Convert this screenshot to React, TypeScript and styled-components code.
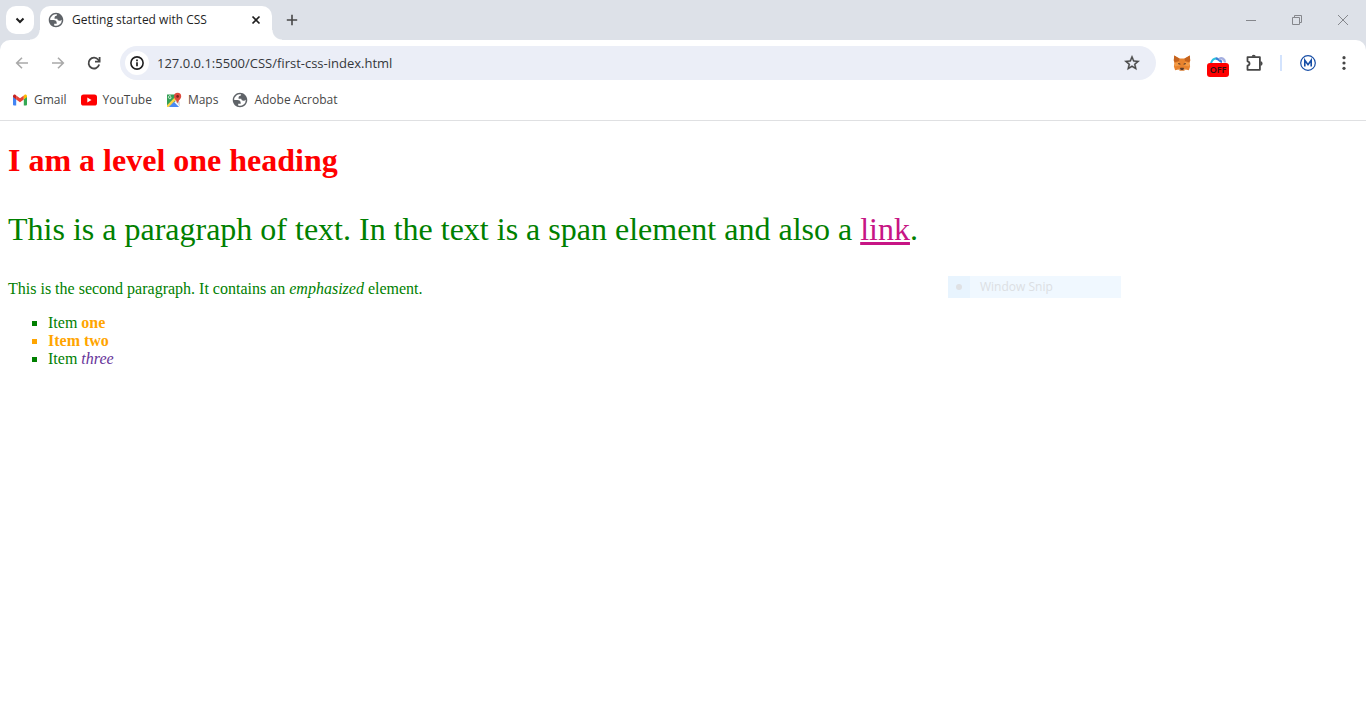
import React from "react";
import styled, { createGlobalStyle } from "styled-components";

const GlobalStyle = createGlobalStyle`
  *, *::before, *::after { box-sizing: border-box; }
  body { margin: 0; background: #ffffff; }
`;

const uiFont = `"Segoe UI", "Open Sans", "Noto Sans", sans-serif`;
const stripColor = "#dde1e8";

const Browser = styled.div`
  display: flex;
  flex-direction: column;
  min-height: 100vh;
  background: #ffffff;
`;

const Chrome = styled.header`
  font-family: ${uiFont};
  font-size: 12px;
  color: #1f1f1f;
  background: ${stripColor};
`;

const TabStrip = styled.div`
  display: flex;
  height: 40px;
  padding-left: 6px;
`;

const IconButton = styled.button<{ $width?: number; $color?: string }>`
  display: flex;
  align-items: center;
  justify-content: center;
  flex: none;
  width: ${({ $width = 36 }) => $width}px;
  padding: 0;
  border: 0;
  background: transparent;
  color: ${({ $color = "#474747" }) => $color};
`;

const TabSearch = styled(IconButton)`
  height: 28px;
  margin: 6px 6px 0 0;
  border-radius: 10px;
  background: #ffffff;
`;

const Tab = styled.div`
  position: relative;
  display: flex;
  align-items: center;
  width: 232px;
  margin-top: 6px;
  padding: 0 4px 6px 8px;
  border-radius: 10px 10px 0 0;
  background: #ffffff;

  &::before,
  &::after {
    content: "";
    position: absolute;
    bottom: 0;
    width: 10px;
    height: 10px;
  }
  &::before {
    right: 100%;
    background: radial-gradient(circle at 0 0, transparent 9px, #ffffff 10px);
  }
  &::after {
    left: 100%;
    background: radial-gradient(circle at 100% 0, transparent 9px, #ffffff 10px);
  }
`;

const TabTitle = styled.span`
  flex: 1;
  margin-left: 8px;
  font-size: 12px;
  line-height: 16px;
  white-space: nowrap;
`;

const WindowControls = styled.div`
  display: flex;
  margin-left: auto;
`;

const Toolbar = styled.div`
  display: flex;
  height: 40px;
  padding: 6px 4px 0;
  border-radius: 10px 10px 0 0;
  background: #ffffff;
`;

const AddressBar = styled.div`
  display: flex;
  align-items: center;
  flex: 1;
  min-width: 0;
  height: 34px;
  margin: 0 8px;
  padding: 0 6px 0 5px;
  border-radius: 17px;
  background: #ebeef7;
`;

const SiteInfo = styled(IconButton)`
  height: 24px;
  border-radius: 12px;
  background: #ffffff;
`;

const AddressInput = styled.input`
  flex: 1;
  min-width: 0;
  margin-left: 8px;
  padding: 0;
  border: 0;
  outline: 0;
  background: transparent;
  color: #35373b;
  font-family: ${uiFont};
  font-size: 13px;
  line-height: 20px;
`;

const Divider = styled.span`
  flex: none;
  align-self: center;
  width: 2px;
  height: 16px;
  margin: 0 8px;
  background: #d3e3fd;
`;

const Extension = styled(IconButton)`
  position: relative;
`;

const OffBadge = styled.span`
  position: absolute;
  left: 7px;
  top: 17px;
  width: 22px;
  height: 14px;
  border-radius: 3px;
  background: #ff0000;
  color: #2a1010;
  font-family: ${uiFont};
  font-size: 9px;
  font-weight: 600;
  line-height: 14px;
  text-align: center;
`;

const Bookmarks = styled.nav`
  display: flex;
  align-items: center;
  gap: 14px;
  height: 41px;
  padding: 0 12px;
  border-bottom: 1px solid #dfe0e2;
  background: #ffffff;
`;

const Bookmark = styled.a`
  display: flex;
  align-items: center;
  gap: 6px;
  color: #474747;
  font-size: 12px;
  line-height: 16px;
  text-decoration: none;
`;

const Page = styled.main`
  padding: 0 8px;
  color: green;
  font-family: "Times New Roman", "Liberation Serif", serif;
  font-size: 16px;
  line-height: 18px;
`;

const Heading = styled.h1`
  margin: 21px 0 0;
  color: red;
  font-size: 32px;
  line-height: 37px;
`;

const Lead = styled.p`
  margin: 32px 0;
  font-size: 32px;
  line-height: 37px;
`;

const PageLink = styled.a`
  color: mediumvioletred;
  text-decoration-thickness: 3px;
`;

const Paragraph = styled.p`
  margin: 0 0 16px;
`;

const List = styled.ul`
  margin: 0;
  padding-left: 40px;
  list-style-type: square;
`;

const Item = styled.li<{ $special?: boolean }>`
  color: ${({ $special }) => ($special ? "orange" : "green")};
  font-weight: ${({ $special }) => ($special ? "bold" : "normal")};
`;

const Highlight = styled.span`
  color: orange;
  font-weight: bold;
`;

const ItemEmphasis = styled.em`
  color: rebeccapurple;
`;

const SnipMenu = styled.div`
  position: absolute;
  left: 948px;
  top: 276px;
  display: flex;
  align-items: center;
  width: 173px;
  height: 22px;
  background: #f0f8ff;
  color: #dcdfe3;
  font-family: ${uiFont};
  font-size: 12px;
  line-height: 16px;
`;

const SnipMark = styled.span`
  display: flex;
  align-items: center;
  justify-content: center;
  width: 22px;
  height: 22px;
  margin-right: 10px;
  background: #e8f4fe;

  &::before {
    content: "";
    width: 6px;
    height: 6px;
    border-radius: 3px;
    background: #dfe1e4;
  }
`;

const GlobeIcon = () => (
  <svg width="16" height="16" viewBox="1 1 22 22" fill="#5f6368" aria-hidden="true">
    <path
      fillRule="evenodd"
      d="M12 2C6.48 2 2 6.48 2 12s4.48 10 10 10 10-4.48 10-10S17.52 2 12 2zM4 12h4.4c3.407.022 4.922 1.73 4.543 5.127H9.488v2.47a8.004 8.004 0 0 0 10.498-8.083C19.327 12.504 18.332 13 17 13c-2.137 0-3.206-.916-3.206-2.75h-3.748c-.274-2.728.683-4.092 2.87-4.092 0-.975.327-1.597.811-1.97A8.004 8.004 0 0 0 4 12z"
    />
  </svg>
);

const StrokeIcon = ({ d, size = 16, width = 1.5 }: { d: string; size?: number; width?: number }) => (
  <svg width={size} height={size} viewBox={`0 0 ${size} ${size}`} fill="none" stroke="currentColor" strokeWidth={width} aria-hidden="true">
    <path d={d} />
  </svg>
);

const ReloadIcon = () => (
  <svg width="16" height="16" viewBox="0 0 16 16" fill="none" stroke="currentColor" strokeWidth="1.8" aria-hidden="true">
    <path d="M13.2 9.6A5.4 5.4 0 1 1 12.3 4.8L13.6 6.2" />
    <path d="M13.6 2v4.7H9" />
  </svg>
);

const InfoIcon = () => (
  <svg width="16" height="16" viewBox="0 0 16 16" fill="none" stroke="currentColor" aria-hidden="true">
    <circle cx="8" cy="8" r="6.1" strokeWidth="1.6" />
    <path d="M8 7.2v4M8 4.6v1.6" strokeWidth="1.7" />
  </svg>
);

const StarIcon = () => (
  <svg width="18" height="18" viewBox="0 0 24 24" fill="currentColor" aria-hidden="true">
    <path d="M22 9.24l-7.19-.62L12 2 9.19 8.63 2 9.24l5.46 4.73L5.82 21 12 17.27 18.18 21l-1.63-7.03L22 9.24zM12 15.4l-3.76 2.27 1-4.28-3.32-2.88 4.38-.38L12 6.1l1.71 4.04 4.38.38-3.32 2.88 1 4.28L12 15.4z" stroke="currentColor" strokeWidth=".5" />
  </svg>
);

const FoxIcon = () => (
  <svg width="18" height="18" viewBox="0 0 18 18" aria-hidden="true">
    <path fill="#e8832e" d="M1.2 1.4 6.6 4.4h4.8l5.400-3 .4 5.200-.6 3 .5 3-1.200 3.600-3.300-.8-1.800 1.500H7.200l-1.800-1.500-3.300.8L.9 12.600l.5-3-.6-3z" />
    <path fill="#c4631f" d="M1.200 1.400 6.600 4.800 5.900 7 2 8.200.8 6.600zM16.800 1.400l-5.400 3.400.7 2.200L16 8.200l1.200-1.600z" />
    <path fill="#f39a45" d="m2 8.800 4-.8 1.200 3.600-5.600 1zM16 8.800l-4-.8-1.200 3.600 5.600 1z" />
    <path fill="#5a3a2a" d="m5 9 2.200.6.200 1.200-2-.6zM13 9l-2.200.6-.2 1.200 2-.6zM7.300 13.800h3.400l.3 1.400-.8.7H7.800l-.8-.7z" />
    <path fill="#d9b9a2" d="m5.400 14.600 1.600.6.8.7h2.400l.8-.7 1.600-.6-1.800 2H7.200z" />
  </svg>
);

const CloudIcon = () => (
  <svg width="18" height="16" viewBox="0 0 18 16" fill="none" aria-hidden="true">
    <path d="M2 8.200C3 5 5 3.500 7.400 3.500" stroke="#2cc3de" strokeWidth="2" />
    <path d="M6.800 3.500C9.400 3.200 10.400 6.200 13 7" stroke="#3a7fd5" strokeWidth="2.400" />
    <path d="M10 4.200C12.600 2.400 15.600 3.400 16 7.500" stroke="#a4aee0" strokeWidth="2.400" />
  </svg>
);

const PuzzleIcon = () => (
  <svg width="20" height="18" viewBox="0 0 20 18" aria-hidden="true">
    <path fill="none" stroke="currentColor" strokeWidth="1.8" strokeLinejoin="round" d="M3.500 3.200h12.400v12.600H3.500v-4.100c2.700-.5 2.700-3.900 0-4.400z" />
    <path fill="currentColor" d="M7.700 2.800a2 2 0 0 1 4 0zM16.400 7.300a2.100 2.100 0 0 1 0 4.400z" />
  </svg>
);

const ProfileIcon = () => (
  <svg width="18" height="18" viewBox="0 0 18 18" fill="none" stroke="#174ea6" aria-hidden="true">
    <circle cx="9" cy="9" r="7.3" strokeWidth="1.2" />
    <path d="M5.800 12.400V6.200L9 10.600 12.200 6.200v6.200" strokeWidth="1.6" />
  </svg>
);

const MenuIcon = () => (
  <svg width="16" height="16" viewBox="0 0 16 16" fill="currentColor" aria-hidden="true">
    <circle cx="8" cy="2.7" r="1.6" />
    <circle cx="8" cy="8" r="1.6" />
    <circle cx="8" cy="13.3" r="1.6" />
  </svg>
);

const GmailIcon = () => (
  <svg width="16" height="16" viewBox="0 0 16 16" aria-hidden="true">
    <path fill="#4285f4" d="M1 4.5 4.2 7v6.5H2a1 1 0 0 1-1-1z" />
    <path fill="#34a853" d="M15 4.5 11.8 7v6.5H14a1 1 0 0 0 1-1z" />
    <path fill="#ea4335" d="M4.2 3.4 8 6.3l3.8-2.9v4L8 10.2 4.2 7.4z" />
    <path fill="#c5221f" d="M1 4.3c0-1.5 1.6-2.1 2.6-1.4l.6.5v4L1 5z" />
    <path fill="#fbbc04" d="M15 4.3c0-1.5-1.6-2.1-2.6-1.4l-.6.5v4L15 5z" />
  </svg>
);

const YouTubeIcon = () => (
  <svg width="16" height="16" viewBox="0 0 16 16" aria-hidden="true">
    <rect y="2.4" width="16" height="11.2" rx="2.6" fill="#ff0000" />
    <path fill="#ffffff" d="M6.3 5.6v4.8L10.5 8z" />
  </svg>
);

const MapsIcon = () => (
  <svg width="16" height="16" viewBox="0 0 16 16" aria-hidden="true">
    <path fill="#34a056" d="M1 2.5h9L11 8l-8.5 7H1z" />
    <path fill="#4a89f3" d="m2.500 15 5.300-5.300 5.300 5.300z" />
    <path fill="#d8dade" d="m8.600 8.900 1.800-1.800L14 10v4.600z" />
    <path fill="#fdd349" d="M1 13.200 9.200 5l1.700 1.700L2.700 15H1z" />
    <path fill="none" stroke="#d9f0df" strokeWidth="1" d="M5.200 5.100H3.900M4.800 4a1.500 1.500 0 1 0 .5 1.700" />
    <path fill="#de4b3e" d="M11.600.8a3.600 3.600 0 0 1 3.600 3.600c0 2.400-2.400 3.200-3.100 6.300h-1C10.400 7.600 8 6.800 8 4.400A3.600 3.600 0 0 1 11.600.8z" />
    <circle cx="11.6" cy="4.4" r="1.3" fill="#7c211b" />
  </svg>
);

const bookmarks = [
  { label: "Gmail", icon: <GmailIcon /> },
  { label: "YouTube", icon: <YouTubeIcon /> },
  { label: "Maps", icon: <MapsIcon /> },
  { label: "Adobe Acrobat", icon: <GlobeIcon /> },
];

export default function App() {
  return (
    <Browser>
      <GlobalStyle />
      <Chrome>
        <TabStrip>
          <TabSearch $width={28} $color="#1f1f1f" aria-label="Search tabs">
            <StrokeIcon d="m4.500 6.500 3.500 3.500 3.500-3.500" width={2} />
          </TabSearch>
          <Tab>
            <GlobeIcon />
            <TabTitle>Getting started with CSS</TabTitle>
            <IconButton $width={24} $color="#1f1f1f" aria-label="Close tab">
              <StrokeIcon d="m4.500 4.500 7 7M11.500 4.500l-7 7" width={1.7} />
            </IconButton>
          </Tab>
          <IconButton $width={40} aria-label="New tab">
            <StrokeIcon d="M8 2.800v10.400M2.800 8h10.400" width={1.6} />
          </IconButton>
          <WindowControls>
            <IconButton $width={46} $color="#85878c" aria-label="Minimize">
              <StrokeIcon d="M3 8.500h10" width={1} />
            </IconButton>
            <IconButton $width={46} $color="#85878c" aria-label="Restore">
              <StrokeIcon d="M3.500 5.500h7v7h-7zM5.500 5.500v-2h7v7h-2" width={1} />
            </IconButton>
            <IconButton $width={46} $color="#85878c" aria-label="Close">
              <StrokeIcon d="m3 3 10 10M13 3 3 13" width={1} />
            </IconButton>
          </WindowControls>
        </TabStrip>
        <Toolbar>
          <IconButton $color="#a9a9a9" aria-label="Back">
            <StrokeIcon d="M14 8H3M8 2.700 2.700 8 8 13.300" width={1.6} />
          </IconButton>
          <IconButton $color="#a9a9a9" aria-label="Forward">
            <StrokeIcon d="M2 8h11M8 2.700 13.300 8 8 13.300" width={1.6} />
          </IconButton>
          <IconButton aria-label="Reload">
            <ReloadIcon />
          </IconButton>
          <AddressBar>
            <SiteInfo $width={24} $color="#1f1f1f" aria-label="View site information">
              <InfoIcon />
            </SiteInfo>
            <AddressInput aria-label="Address" defaultValue="127.0.0.1:5500/CSS/first-css-index.html" />
            <IconButton aria-label="Bookmark this tab">
              <StarIcon />
            </IconButton>
          </AddressBar>
          <IconButton aria-label="Wallet extension">
            <FoxIcon />
          </IconButton>
          <Extension aria-label="Cloud extension">
            <CloudIcon />
            <OffBadge>OFF</OffBadge>
          </Extension>
          <IconButton aria-label="Extensions">
            <PuzzleIcon />
          </IconButton>
          <Divider />
          <IconButton aria-label="Profile">
            <ProfileIcon />
          </IconButton>
          <IconButton aria-label="Menu">
            <MenuIcon />
          </IconButton>
        </Toolbar>
        <Bookmarks aria-label="Bookmarks">
          {bookmarks.map(({ label, icon }) => (
            <Bookmark key={label} href="#">
              {icon}
              {label}
            </Bookmark>
          ))}
        </Bookmarks>
      </Chrome>
      <Page>
        <Heading>I am a level one heading</Heading>
        <Lead>
          This is a paragraph of text. In the text is a <span>span element</span> and also a{" "}
          <PageLink href="#">link</PageLink>.
        </Lead>
        <Paragraph>
          This is the second paragraph. It contains an <em>emphasized</em> element.
        </Paragraph>
        <List>
          <Item>
            Item <Highlight>one</Highlight>
          </Item>
          <Item $special>Item two</Item>
          <Item>
            Item <ItemEmphasis>three</ItemEmphasis>
          </Item>
        </List>
      </Page>
      <SnipMenu>
        <SnipMark />
        Window Snip
      </SnipMenu>
    </Browser>
  );
}
